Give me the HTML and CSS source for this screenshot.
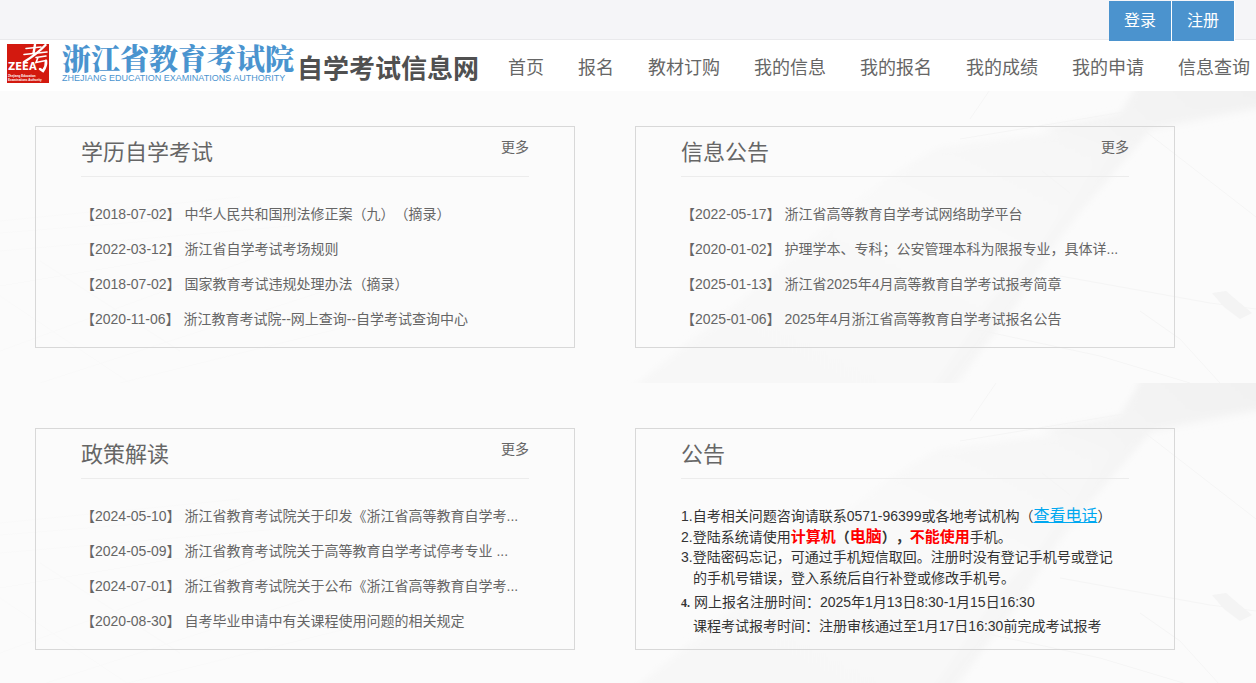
FILE: index.html
```html
<!DOCTYPE html>
<html lang="zh-CN">
<head>
<meta charset="utf-8">
<meta name="viewport" content="width=device-width, initial-scale=1">
<title>自学考试信息网</title>
<link rel="stylesheet" href="styles.css">
</head>
<body>
<svg class="defs" aria-hidden="true">
  <defs>
    <linearGradient id="beam" x1="0" y1="1" x2="1" y2="0">
      <stop offset="0" stop-color="#f7f7f7"/>
      <stop offset="0.5" stop-color="#f9f9f9"/>
      <stop offset="1" stop-color="#f4f4f4"/>
    </linearGradient>
    <linearGradient id="edge" x1="0" y1="1" x2="1" y2="0">
      <stop offset="0" stop-color="#f5f5f5"/>
      <stop offset="0.5" stop-color="#f6f6f6"/>
      <stop offset="1" stop-color="#f1f1f1"/>
    </linearGradient>
    <filter id="soft" x="-5%" y="-5%" width="110%" height="110%">
      <feGaussianBlur stdDeviation="3"/>
    </filter>
    <symbol id="backdrop" viewBox="0 0 1256 302" preserveAspectRatio="xMaxYMin slice">
      <g filter="url(#soft)">
        <path fill="url(#beam)" d="M628 310 L760 204 Q870 100 940 66 L1120 44 L1142 -10 H1270 V26 Q1190 42 1150 50 L1140 62 L1080 132 L954 310 Z"/>
        <path fill="url(#edge)" d="M1146 -10 H1270 V22 Q1190 34 1152 46 L1060 154 L1018 222 L948 310 H932 L990 222 L1040 165 L1110 70 Q1085 56 1040 48 L1120 32 Z"/>
      </g>
      <g fill="none" stroke="#f5f5f5">
        <path d="M960 58 L1130 30 M996 0 L970 38 M1140 46 L1256 136 M1060 195 L1210 222 L1256 228 M1140 230 L1180 258 L1220 302 M960 245 L1100 275 L1190 302 M1042 90 L1070 112"/>
      </g>
      <g fill="none" stroke="#f9f9f9">
        <path d="M0 140 L240 116 M0 152 L300 128 M0 170 L290 145 M0 205 L240 165 M0 215 L130 302 M40 180 L180 270 M0 270 L260 175 M40 302 L340 205 M120 302 L370 240"/>
      </g>
      <path fill="#f4f4f4" d="M1212 212 L1226 210 L1240 222 L1252 232 L1240 238 L1224 226 Z"/>
    </symbol>
  </defs>
</svg>

<div class="topbar">
  <button class="topbar-btn" type="button">登录</button>
  <button class="topbar-btn" type="button">注册</button>
</div>

<header class="header">
  <div class="brand">
    <svg class="brand-mark" viewBox="0 0 42 39" role="img" aria-label="ZEEA">
      <rect width="42" height="39" fill="#d3190f"/>
      <g fill="none" stroke="#fff" stroke-linecap="round">
        <path stroke-width="1.600" d="M19 4.500 L34 3 M17 10.500 L40 8"/>
        <path stroke-width="2.400" d="M28 0.500 L26.500 9.500 M38.500 1 Q30 10 17 18"/>
        <path stroke-width="1.600" d="M29 13.500 L39 12 M31 13.500 L29 18.500 L39 16.500"/>
        <path stroke-width="2.600" d="M39 16.800 Q39.500 22 36 27 L33 25"/>
      </g>
      <text class="mark-name" x="1" y="26">ZEEA</text>
      <text class="mark-small" x="1" y="33">Zhejiang Education</text>
      <text class="mark-small" x="1" y="37">Examinations Authority</text>
    </svg>
    <div class="brand-text">
      <span class="brand-cn">浙江省教育考试院</span>
      <span class="brand-en">ZHEJIANG EDUCATION EXAMINATIONS AUTHORITY</span>
    </div>
    <span class="brand-site">自学考试信息网</span>
  </div>
  <nav class="nav">
    <a href="#">首页</a>
    <a href="#">报名</a>
    <a href="#">教材订购</a>
    <a href="#">我的信息</a>
    <a href="#">我的报名</a>
    <a href="#">我的成绩</a>
    <a href="#">我的申请</a>
    <a href="#">信息查询</a>
  </nav>
</header>

<main>
  <div class="band band-first">
    <svg class="band-art" aria-hidden="true"><use href="#backdrop"/></svg>
    <section class="card">
      <div class="card-head"><h2>学历自学考试</h2><a href="#">更多</a></div>
      <ul class="news">
        <li><a href="#">【2018-07-02】 中华人民共和国刑法修正案（九）（摘录）</a></li>
        <li><a href="#">【2022-03-12】 浙江省自学考试考场规则</a></li>
        <li><a href="#">【2018-07-02】 国家教育考试违规处理办法（摘录）</a></li>
        <li><a href="#">【2020-11-06】 浙江教育考试院--网上查询--自学考试查询中心</a></li>
      </ul>
    </section>
    <section class="card">
      <div class="card-head"><h2>信息公告</h2><a href="#">更多</a></div>
      <ul class="news">
        <li><a href="#">【2022-05-17】 浙江省高等教育自学考试网络助学平台</a></li>
        <li><a href="#">【2020-01-02】 护理学本、专科；公安管理本科为限报专业，具体详...</a></li>
        <li><a href="#">【2025-01-13】 浙江省2025年4月高等教育自学考试报考简章</a></li>
        <li><a href="#">【2025-01-06】 2025年4月浙江省高等教育自学考试报名公告</a></li>
      </ul>
    </section>
  </div>
  <div class="band">
    <svg class="band-art" aria-hidden="true"><use href="#backdrop"/></svg>
    <section class="card">
      <div class="card-head"><h2>政策解读</h2><a href="#">更多</a></div>
      <ul class="news">
        <li><a href="#">【2024-05-10】 浙江省教育考试院关于印发《浙江省高等教育自学考...</a></li>
        <li><a href="#">【2024-05-09】 浙江省教育考试院关于高等教育自学考试停考专业 ...</a></li>
        <li><a href="#">【2024-07-01】 浙江省教育考试院关于公布《浙江省高等教育自学考...</a></li>
        <li><a href="#">【2020-08-30】 自考毕业申请中有关课程使用问题的相关规定</a></li>
      </ul>
    </section>
    <section class="card">
      <div class="card-head"><h2>公告</h2></div>
      <div class="notice">
        <p>1.自考相关问题咨询请联系0571-96399或各地考试机构（<a href="#">查看电话</a>）</p>
        <p>2.登陆系统请使用<strong><em>计算机</em>（<em class="large">电脑</em>），<em>不能使用</em></strong>手机。</p>
        <p>3.登陆密码忘记，可通过手机短信取回。注册时没有登记手机号或登记</p>
        <p class="indent">的手机号错误，登入系统后自行补登或修改手机号。</p>
        <p class="tall"><span class="num">4.</span> 网上报名注册时间：2025年1月13日8:30-1月15日16:30</p>
        <p class="tall indent">课程考试报考时间：注册审核通过至1月17日16:30前完成考试报考</p>
      </div>
    </section>
  </div>
</main>
</body>
</html>
```

FILE: styles.css
```css
* { box-sizing: border-box; }

body {
  margin: 0;
  background: #fbfbfb;
  color: #666;
  font: 14px/20px "Liberation Sans", "Noto Sans CJK SC", sans-serif;
  text-spacing-trim: space-all;
  overflow-x: hidden;
}

a { color: inherit; text-decoration: none; }
h2, p, ul { margin: 0; padding: 0; }

.defs { position: absolute; width: 0; height: 0; }

.topbar {
  position: relative;
  z-index: 3;
  display: flex;
  justify-content: flex-end;
  gap: 1px;
  height: 40px;
  padding: 1px 22px 0 0;
  background: #f5f5f8;
  border-bottom: 1px solid #e9e9ec;
}

.topbar-btn {
  flex: none;
  width: 62px;
  height: 40px;
  padding: 0;
  border: 0;
  background: #4b93ce;
  color: #fff;
  font: 16px/40px "Liberation Sans", "Noto Sans CJK SC", sans-serif;
  box-shadow: 1px 0 #fff;
  cursor: pointer;
}

.header {
  position: relative;
  z-index: 2;
  display: flex;
  height: 51px;
  background: #fff;
}

.brand {
  flex: none;
  display: flex;
  width: 508px;
  padding: 4px 0 0 7px;
}

.brand-mark { flex: none; width: 42px; height: 39px; }
.mark-name { fill: #fff; font: bold 10px "DejaVu Sans", sans-serif; }
.mark-small { fill: #fff; font: bold 3px "Liberation Sans", sans-serif; }

.brand-text {
  display: flex;
  flex-direction: column;
  margin-left: 13px;
  color: #4a94cf;
  white-space: nowrap;
}

.brand-cn {
  font: 900 29px/27px "Noto Serif CJK SC", "Noto Sans CJK SC", serif;
}

.brand-en { font-size: 9px; line-height: 14px; }

.brand-site {
  margin-left: 3px;
  color: #505050;
  font: bold 26px/46px "Noto Sans CJK SC", sans-serif;
  white-space: nowrap;
}

.nav {
  display: flex;
  gap: 34px;
  font-size: 18px;
  line-height: 56px;
  white-space: nowrap;
}

.band {
  position: relative;
  display: grid;
  grid-template-columns: 1fr 1fr;
  gap: 60px;
  padding: 45px 81px 35px 35px;
}

.band-first { margin-top: -10px; }

.band-art {
  position: absolute;
  inset: 0;
  width: 100%;
  height: 100%;
}

.card {
  position: relative;
  min-height: 222px;
  padding: 0 45px;
  border: 1px solid #d8d8d8;
}

.card-head {
  display: flex;
  justify-content: space-between;
  height: 50px;
  border-bottom: 1px solid #ececec;
}

.card-head h2 { font-size: 22px; font-weight: normal; line-height: 51px; }
.card-head a { line-height: 40px; }

.news { padding-top: 20px; list-style: none; }

.news li {
  line-height: 35px;
  white-space: nowrap;
  overflow: hidden;
}

.notice {
  padding-top: 26px;
  color: #333;
  line-height: 21px;
  white-space: nowrap;
}

.notice p { height: 21px; }
.notice .tall { height: 24px; line-height: 26px; }
.notice .indent { padding-left: 12px; }
.notice a { color: #00a8f0; font-size: 16px; text-decoration: underline; }
.notice em { color: #f00; font-size: 15px; font-style: normal; }
.notice .large { font-size: 16px; }
.num { font: bold 12px "Liberation Serif", serif; }
```
